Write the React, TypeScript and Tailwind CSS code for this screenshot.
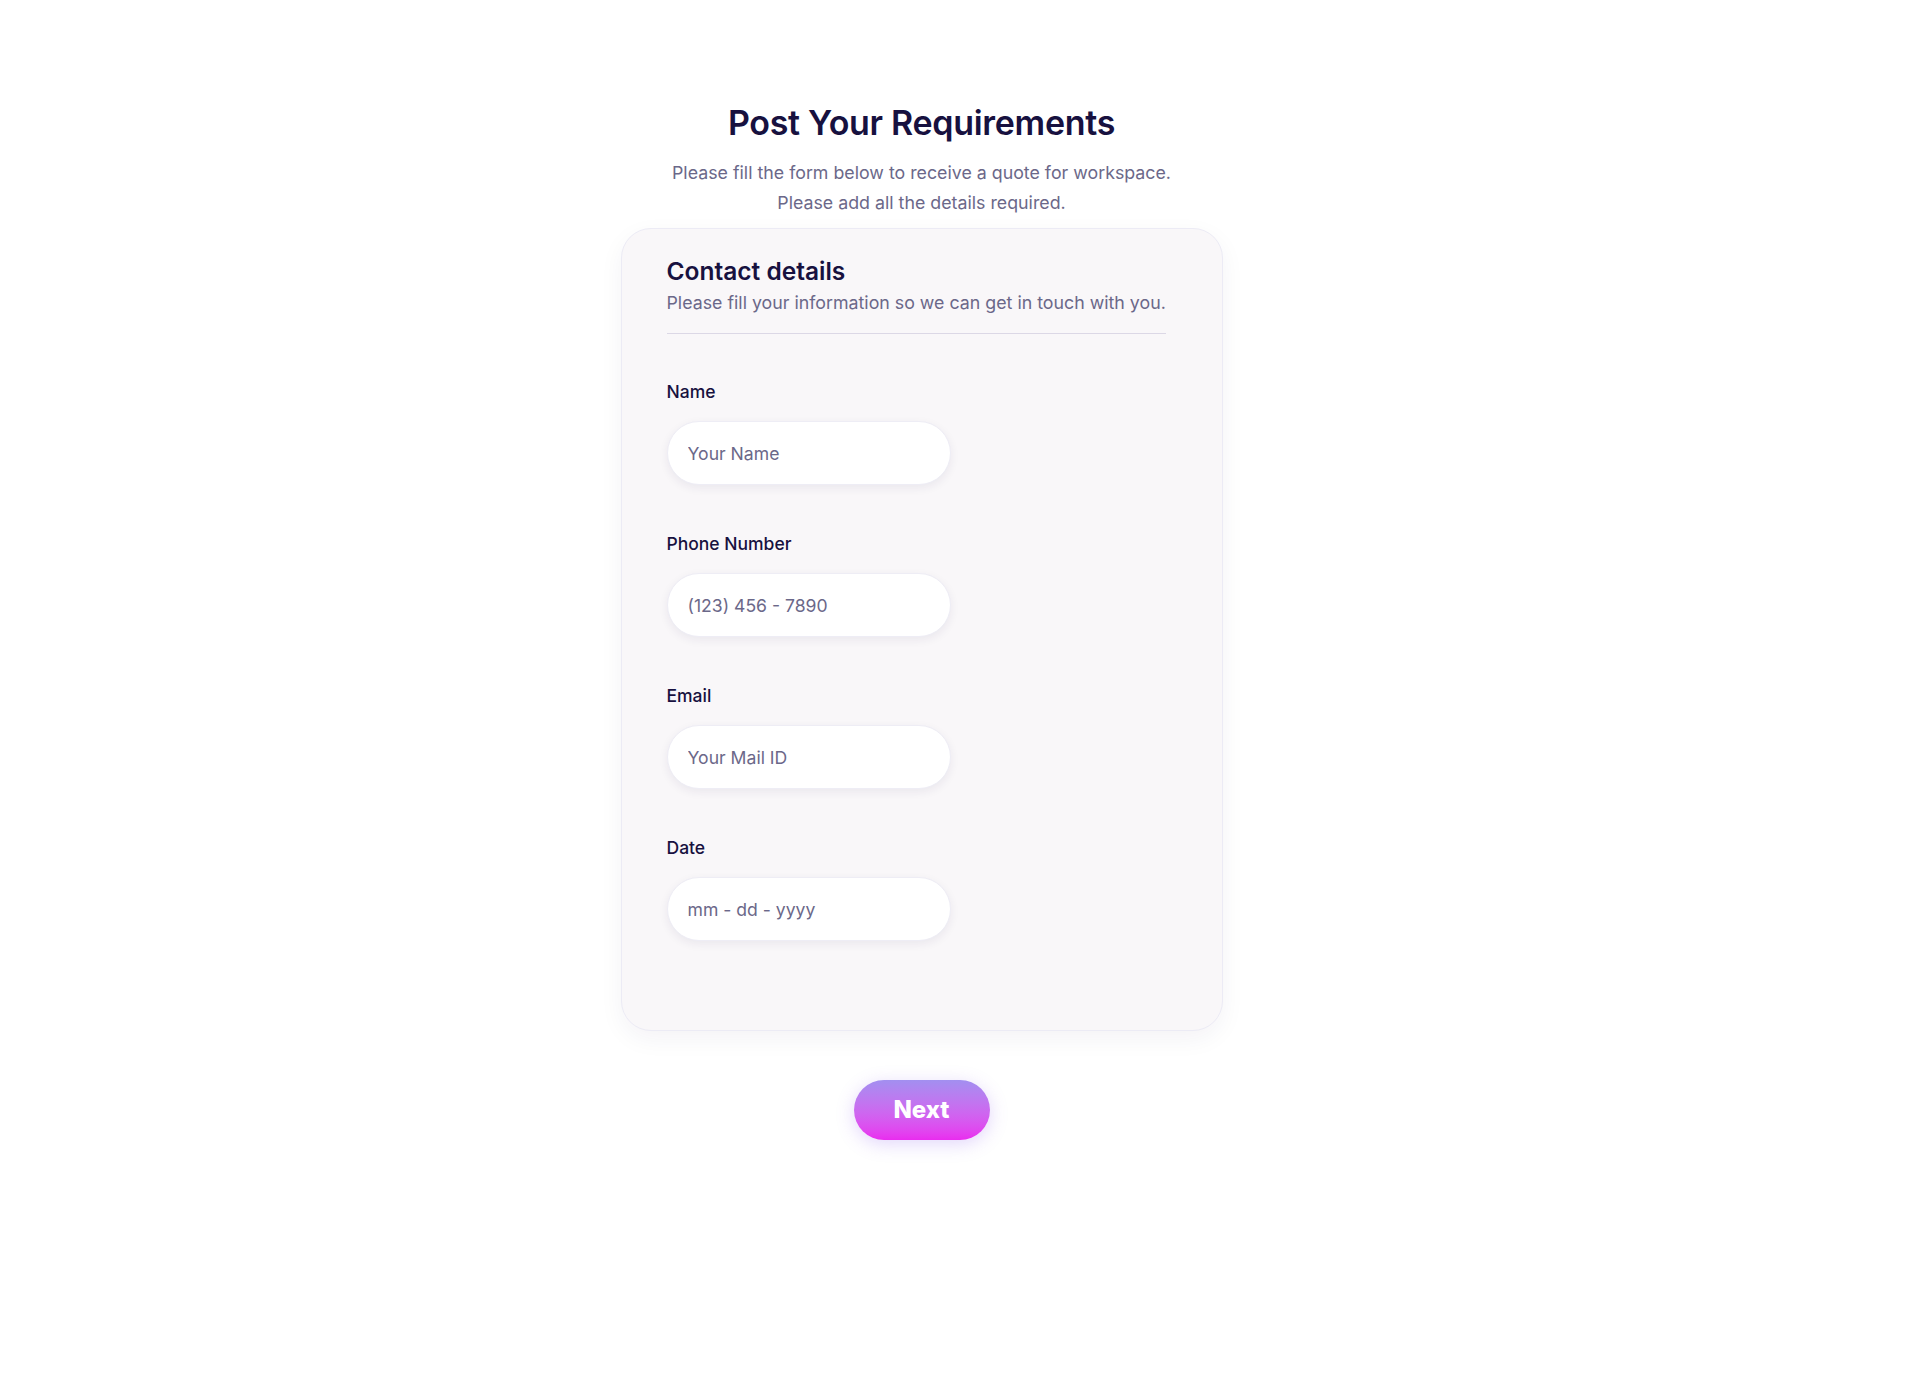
import { useState } from "react";

const fields = [
    { label: "Name", name: "name", placeholder: "Your Name" },
    { label: "Phone Number", name: "phone", placeholder: "(123) 456 - 7890" },
    { label: "Email", name: "email", placeholder: "Your Mail ID" },
    { label: "Date", name: "date", placeholder: "mm - dd - yyyy" },
];

export default function App() {
    const [form, setForm] = useState<Record<string, string>>({ name: "", phone: "", email: "", date: "" });

    const handleChange = (e: React.ChangeEvent<HTMLInputElement>) => {
        setForm({ ...form, [e.target.name]: e.target.value });
    };

    return (
        <div className="min-h-screen bg-white font-['Inter',sans-serif]">
            <div className="w-[1843px] flex flex-col items-center pt-[103px]">
                <h1 className="text-[34px] leading-[40px] font-semibold text-[#17113f] tracking-[-0.3px]">
                    Post Your Requirements
                </h1>
                <p className="mt-[15px] text-[17.8px] leading-[30px] text-[#6b6889] text-center">
                    Please fill the form below to receive a quote for workspace.
                    <br />
                    Please add all the details required.
                </p>

                <div className="mt-[10px] w-[602px] bg-[#f9f7f9] border border-[#ecebf5] rounded-[30px] shadow-[0_8px_24px_rgba(30,20,80,0.05)] pl-[45px] pr-[56px] pt-[27px] pb-[89px]">
                    <h2 className="text-[24.5px] leading-[30px] font-semibold text-[#17113f]">Contact details</h2>
                    <p className="mt-[5px] text-[17.8px] leading-[24px] text-[#6b6889] whitespace-nowrap">
                        Please fill your information so we can get in touch with you.
                    </p>
                    <div className="mt-[18px] h-px bg-[#dcd8e6]" />

                    <div className="mt-[46px] flex flex-col gap-[47px]">
                        {fields.map((f) => (
                            <div key={f.name} className="flex flex-col gap-[17px]">
                                <label className="text-[17.5px] leading-[24px] font-medium text-[#17113f]">{f.label}</label>
                                <input
                                    name={f.name}
                                    value={form[f.name]}
                                    onChange={handleChange}
                                    placeholder={f.placeholder}
                                    className="w-[284px] h-[64px] rounded-full bg-white border border-[#eeedf5] px-[20px] text-[17.6px] text-[#17113f] placeholder:text-[#6b6889] shadow-[0_3px_10px_rgba(40,30,90,0.07)] outline-none"
                                />
                            </div>
                        ))}
                    </div>
                </div>

                <button
                    type="button"
                    className="mt-[49px] w-[136px] h-[60px] rounded-full bg-gradient-to-b from-[#a28ff0] to-[#e92bef] text-white text-[24px] font-extrabold shadow-[0_4px_18px_rgba(140,90,240,0.25)]"
                >
                    Next
                </button>
            </div>
        </div>
    );
}
